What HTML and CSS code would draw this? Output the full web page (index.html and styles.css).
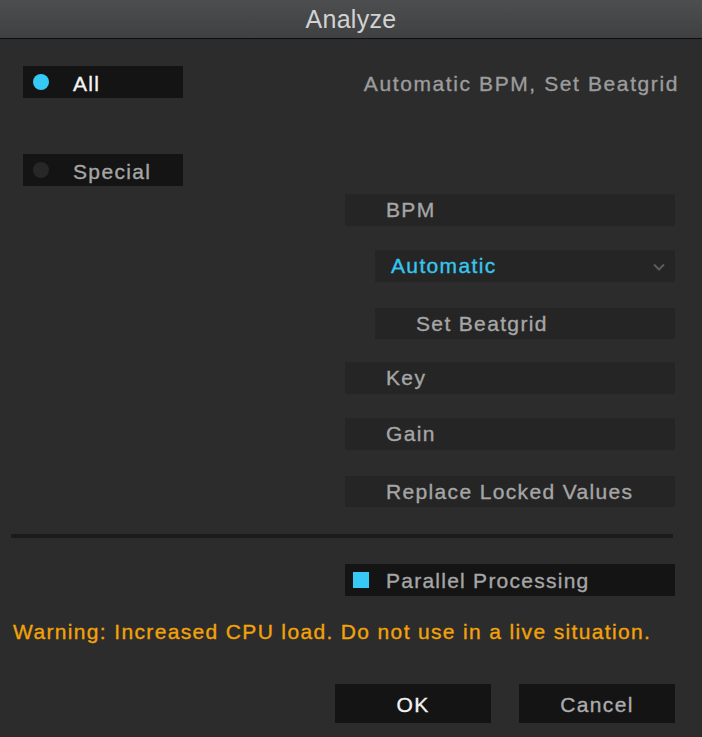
FILE: index.html
```html
<!DOCTYPE html>
<html>
<head>
<meta charset="utf-8">
<title>Analyze</title>
<link rel="stylesheet" href="styles.css">
</head>
<body>
<div class="window">
  <div class="titlebar">Analyze</div>
  <div class="content">
    <div class="top-row">
      <div class="radio selected"><span class="dot"></span><span class="radio-label">All</span></div>
      <div class="summary">Automatic BPM, Set Beatgrid</div>
    </div>
    <div class="radio special"><span class="dot"></span><span class="radio-label">Special</span></div>
    <div class="options">
      <div class="opt">BPM</div>
      <div class="opt sub dropdown">
        <span class="dd-label">Automatic</span>
        <svg class="chev" width="12" height="8" viewBox="0 0 12 8"><polyline points="1,1.5 6,6.5 11,1.5" fill="none" stroke="#5c5c5c" stroke-width="2"/></svg>
      </div>
      <div class="opt sub beatgrid">Set Beatgrid</div>
      <div class="opt key">Key</div>
      <div class="opt gain">Gain</div>
      <div class="opt replace">Replace Locked Values</div>
    </div>
    <div class="separator"></div>
    <div class="parallel"><span class="square"></span><span class="par-label">Parallel Processing</span></div>
    <div class="warning">Warning: Increased CPU load. Do not use in a live situation.</div>
    <div class="buttons">
      <div class="btn ok">OK</div>
      <div class="btn cancel">Cancel</div>
    </div>
  </div>
</div>
</body>
</html>
```

FILE: styles.css
```css
html, body {
  margin: 0;
  padding: 0;
  background: #2c2c2c;
}
body {
  font-family: "Liberation Sans", Arial, sans-serif;
}
.window {
  width: 702px;
  height: 737px;
  background: #2c2c2c;
  overflow: hidden;
  display: flex;
  flex-direction: column;
}
.titlebar {
  height: 38px;
  border-bottom: 1px solid #0e0e0e;
  background: linear-gradient(#4d4e50, #3f4042);
  color: #d2d2d2;
  font-size: 25px;
  line-height: 38px;
  text-align: center;
  letter-spacing: 0.3px;
}
.content {
  padding: 0 27px 0 23px;
  display: flex;
  flex-direction: column;
  font-size: 21px;
  letter-spacing: 1.35px;
  color: #a6a6a6;
  -webkit-text-stroke: 0.35px currentColor;
}
.top-row {
  margin-top: 27px;
  display: flex;
  justify-content: space-between;
  align-items: center;
}
.radio {
  width: 160px;
  height: 32px;
  background: #141414;
  display: flex;
  align-items: center;
  box-sizing: border-box;
  padding-left: 10px;
}
.dot {
  width: 16px;
  height: 16px;
  border-radius: 50%;
  background: #272727;
  flex: none;
}
.radio.selected .dot {
  background: #36c9f6;
}
.radio-label {
  margin-left: 24px;
  line-height: 32px;
  padding-top: 3px;
}
.radio.selected .radio-label {
  color: #f4f4f4;
}
.summary {
  color: #9c9c9c;
  letter-spacing: 1.6px;
  margin-right: -4px;
  padding-top: 3px;
}
.special {
  margin-top: 56px;
}
.options {
  margin-top: 8px;
  align-self: flex-end;
  width: 330px;
  display: flex;
  flex-direction: column;
}
.opt {
  height: 32px;
  line-height: 32px;
  background: #252525;
  padding-left: 41px;
  box-sizing: border-box;
}
.opt.sub {
  margin-left: 30px;
}
.dropdown {
  margin-top: 24px;
  padding-left: 16px;
  display: flex;
  align-items: center;
  justify-content: space-between;
  color: #37c6ee;
  padding-right: 10px;
}
.chev {
  margin-top: 1px;
}
.beatgrid {
  margin-top: 26px;
  height: 31px;
  line-height: 31px;
}
.key {
  margin-top: 23px;
}
.gain {
  margin-top: 24px;
}
.replace {
  margin-top: 26px;
  height: 31px;
  line-height: 31px;
}
.separator {
  margin-top: 27px;
  margin-left: -12px;
  width: 662px;
  height: 4px;
  background: #1b1b1b;
}
.parallel {
  margin-top: 26px;
  align-self: flex-end;
  width: 330px;
  height: 32px;
  background: #141414;
  display: flex;
  align-items: center;
  padding-left: 8px;
  box-sizing: border-box;
}
.square {
  width: 16px;
  height: 16px;
  background: #36c9f6;
  flex: none;
}
.par-label {
  margin-left: 17px;
  padding-top: 2px;
  letter-spacing: 1.25px;
}
.warning {
  margin-top: 24px;
  margin-left: -10px;
  color: #f2a20a;
  letter-spacing: 1.35px;
  line-height: 24px;
  white-space: nowrap;
}
.buttons {
  margin-top: 40px;
  display: flex;
  justify-content: flex-end;
  gap: 28px;
}
.btn {
  width: 156px;
  height: 39px;
  line-height: 41px;
  background: #141414;
  text-align: center;
}
.ok {
  color: #f2f2f2;
}
.cancel {
  color: #acacac;
}
```
